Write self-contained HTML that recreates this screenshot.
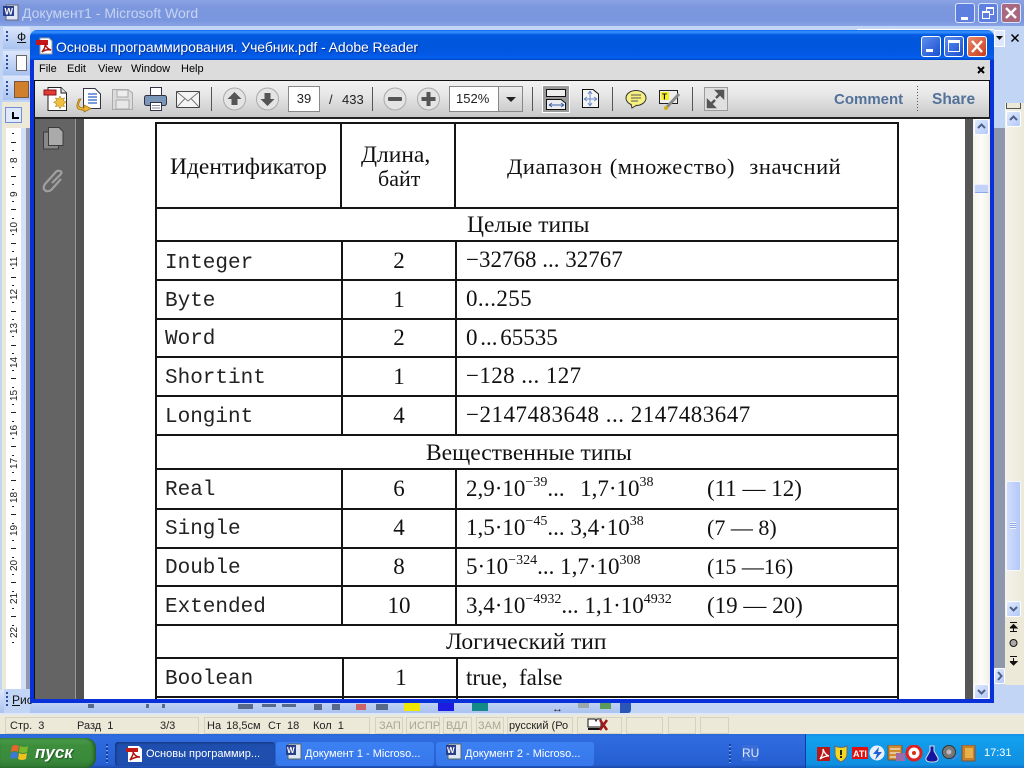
<!DOCTYPE html>
<html><head><meta charset="utf-8"><style>
html,body{margin:0;padding:0;background:#c3d5f5}
body{width:1024px;height:768px;overflow:hidden;position:relative;font-family:"Liberation Sans",sans-serif}
.a{position:absolute;white-space:nowrap}
.s{position:absolute;white-space:nowrap;font-family:"Liberation Serif",serif;font-size:23px;line-height:24px;color:#111;filter:blur(.25px)}
.m{position:absolute;white-space:nowrap;font-family:"Liberation Mono",monospace;font-size:21px;line-height:24px;color:#222;left:165px;filter:blur(.25px)}
.c{position:absolute;white-space:nowrap;font-family:"Liberation Serif",serif;font-size:23px;line-height:24px;color:#111;width:116px;left:341px;text-align:center;filter:blur(.25px)}
.h{position:absolute;background:#151515;left:155px;width:744px;height:2px}
.v{position:absolute;background:#151515;width:2px}
sup{font-size:14px;line-height:0;position:relative;top:-1px;vertical-align:super}
.t{position:absolute;font-size:11px;color:#000;white-space:nowrap;line-height:14px;top:62px}
.st{position:absolute;font-size:12px;color:#222;white-space:nowrap;line-height:14px;top:719px}
.b{position:absolute;top:717px;height:15px;border:1px solid #d6d2c0;box-sizing:content-box}
.task{position:absolute;top:742px;height:24px;border-radius:3px;background:linear-gradient(#3c81f3,#3677ea);color:#fff;font-size:11px;line-height:24px;white-space:nowrap}
.btn{position:absolute;width:20px;height:21px;border:1px solid #fff;border-radius:3px;box-sizing:border-box}
.sb{position:absolute;width:15px;height:15px;background:linear-gradient(135deg,#e0eafd,#b4c9f8);border:1px solid #fff;border-radius:2px;box-sizing:border-box}
</style></head><body>

<!-- Word title bar -->
<div class="a" style="left:0;top:0;width:1024px;height:26px;background:linear-gradient(#8aa3e4,#7b97dd 30%,#7a96de 80%,#89a4e6)"></div>
<svg class="a" style="left:2px;top:4px" width="18" height="18"><rect x="4" y="1" width="12" height="15" fill="#dfe6f5" stroke="#667"/><rect x="1" y="2" width="11" height="10" fill="#2a3f8a"/><text x="2.5" y="10.5" font-family="Liberation Sans" font-size="9" font-weight="bold" fill="#fff">W</text></svg>
<div class="a" style="left:22px;top:4px;font-size:14px;line-height:18px;color:#c6d3f2;letter-spacing:0">Документ1 - Microsoft Word</div>
<div class="a" style="left:955px;top:3px;width:20px;height:20px;border:1px solid #dbe4f8;border-radius:3px;box-sizing:border-box;background:#5d80e0"><div class="a" style="left:5px;top:13px;width:7px;height:3px;background:#fff"></div></div>
<div class="a" style="left:978px;top:3px;width:20px;height:20px;border:1px solid #dbe4f8;border-radius:3px;box-sizing:border-box;background:#5d80e0"><div class="a" style="left:7px;top:3px;width:6px;height:5px;border:1px solid #fff;border-top-width:2px"></div><div class="a" style="left:3px;top:7px;width:6px;height:5px;border:1px solid #fff;border-top-width:2px;background:#5d80e0"></div></div>
<div class="a" style="left:1001px;top:3px;width:20px;height:20px;border:1px solid #dbe4f8;border-radius:3px;box-sizing:border-box;background:#a8687f"></div>
<svg class="a" style="left:1001px;top:3px" width="20" height="20"><path d="M5 5L15 15M15 5L5 15" stroke="#fff" stroke-width="2.4"/></svg>

<!-- Word body left/top -->
<div class="a" style="left:0;top:26px;width:1024px;height:77px;background:#c3d5f5"></div>
<div class="a" style="left:857px;top:29px;width:137px;height:1px;background:#fff"></div>
<div class="a" style="left:994px;top:30px;width:11px;height:17px;background:#dfe8fb;border:1px solid #fff;box-sizing:border-box"></div>
<svg class="a" style="left:995px;top:35px" width="9" height="6"><path d="M1 1H8L4.500 5Z" fill="#111"/></svg>
<svg class="a" style="left:1010px;top:33px" width="10" height="10"><path d="M1.500 1.500L8.500 8.500M8.500 1.500L1.500 8.500" stroke="#000" stroke-width="1.500"/></svg>
<div class="a" style="left:3px;top:27px;width:27px;height:22px;background:linear-gradient(#dce7fb,#a9c2ef)"></div>
<div class="a" style="left:3px;top:51px;width:27px;height:24px;background:linear-gradient(#dce7fb,#a9c2ef)"></div>
<div class="a" style="left:3px;top:76px;width:27px;height:24px;background:linear-gradient(#dce7fb,#a9c2ef)"></div>
<div class="a" style="left:6px;top:31px;width:2px;height:12px;background:repeating-linear-gradient(#2b4f9e 0 2px,transparent 2px 4px)"></div>
<div class="a" style="left:6px;top:55px;width:2px;height:14px;background:repeating-linear-gradient(#2b4f9e 0 2px,transparent 2px 4px)"></div>
<div class="a" style="left:6px;top:81px;width:2px;height:14px;background:repeating-linear-gradient(#2b4f9e 0 2px,transparent 2px 4px)"></div>
<div class="a" style="left:17px;top:30px;font-size:12px;text-decoration:underline;color:#111">Ф</div>
<div class="a" style="left:16px;top:55px;width:9px;height:14px;background:#fff;border:1px solid #666"></div>
<div class="a" style="left:14px;top:81px;width:13px;height:15px;background:#d07f2d;border:1px solid #754"></div>
<!-- ruler column -->
<div class="a" style="left:2px;top:102px;width:28px;height:601px;background:#ece9d8"></div>
<div class="a" style="left:0;top:102px;width:2px;height:601px;background:#c3d5f5"></div>
<div class="a" style="left:5px;top:107px;width:17px;height:16px;background:#dfe8fc;border:1px solid #6f8fd8;box-sizing:border-box"><div class="a" style="left:6px;top:4px;width:2px;height:7px;background:#000"></div><div class="a" style="left:6px;top:9px;width:7px;height:2px;background:#000"></div></div>
<div class="a" style="left:6px;top:128px;width:15px;height:575px;background:#fff"></div>
<div class="a" style="left:21px;top:128px;width:5px;height:575px;background:#d4e0f7"></div>
<div class="a" style="left:26px;top:128px;width:4px;height:575px;background:#8f97ad"></div>
<svg class="a" style="left:0;top:128px" width="22" height="575" font-family="Liberation Sans" font-size="10" fill="#222">
<g fill="#222">
<rect x="12" y="5" width="2" height="1"/><rect x="11" y="14" width="5" height="1"/><rect x="12" y="22" width="2" height="1"/><rect x="12" y="39" width="2" height="1"/><rect x="11" y="48" width="5" height="1"/><rect x="12" y="56" width="2" height="1"/><rect x="12" y="73" width="2" height="1"/><rect x="11" y="81" width="5" height="1"/><rect x="12" y="90" width="2" height="1"/><rect x="12" y="106" width="2" height="1"/><rect x="11" y="115" width="5" height="1"/><rect x="12" y="123" width="2" height="1"/><rect x="12" y="140" width="2" height="1"/><rect x="11" y="149" width="5" height="1"/><rect x="12" y="157" width="2" height="1"/><rect x="12" y="174" width="2" height="1"/><rect x="11" y="183" width="5" height="1"/><rect x="12" y="191" width="2" height="1"/><rect x="12" y="208" width="2" height="1"/><rect x="11" y="217" width="5" height="1"/><rect x="12" y="225" width="2" height="1"/><rect x="12" y="242" width="2" height="1"/><rect x="11" y="250" width="5" height="1"/><rect x="12" y="259" width="2" height="1"/><rect x="12" y="276" width="2" height="1"/><rect x="11" y="284" width="5" height="1"/><rect x="12" y="293" width="2" height="1"/><rect x="12" y="310" width="2" height="1"/><rect x="11" y="318" width="5" height="1"/><rect x="12" y="327" width="2" height="1"/><rect x="12" y="344" width="2" height="1"/><rect x="11" y="352" width="5" height="1"/><rect x="12" y="361" width="2" height="1"/><rect x="12" y="378" width="2" height="1"/><rect x="11" y="386" width="5" height="1"/><rect x="12" y="395" width="2" height="1"/><rect x="12" y="412" width="2" height="1"/><rect x="11" y="420" width="5" height="1"/><rect x="12" y="429" width="2" height="1"/><rect x="12" y="446" width="2" height="1"/><rect x="11" y="454" width="5" height="1"/><rect x="12" y="463" width="2" height="1"/><rect x="12" y="480" width="2" height="1"/><rect x="11" y="488" width="5" height="1"/><rect x="12" y="497" width="2" height="1"/><rect x="12" y="514" width="2" height="1"/>
</g>
<text transform="translate(17,35) rotate(-90)">8</text>
<text transform="translate(17,69) rotate(-90)">9</text>
<text transform="translate(17,105) rotate(-90)">10</text>
<text transform="translate(17,139) rotate(-90)">11</text>
<text transform="translate(17,172) rotate(-90)">12</text>
<text transform="translate(17,206) rotate(-90)">13</text>
<text transform="translate(17,240) rotate(-90)">14</text>
<text transform="translate(17,273) rotate(-90)">15</text>
<text transform="translate(17,308) rotate(-90)">16</text>
<text transform="translate(17,341) rotate(-90)">17</text>
<text transform="translate(17,375) rotate(-90)">18</text>
<text transform="translate(17,408) rotate(-90)">19</text>
<text transform="translate(17,443) rotate(-90)">20</text>
<text transform="translate(17,476) rotate(-90)">21</text>
<text transform="translate(17,510) rotate(-90)">22</text>
</svg>

<!-- Word right side -->
<div class="a" style="left:994px;top:103px;width:30px;height:612px;background:#c3d5f5"></div>
<div class="a" style="left:994px;top:128px;width:11px;height:540px;background:#8f97ad"></div>
<div class="a" style="left:1005px;top:103px;width:19px;height:514px;background:linear-gradient(90deg,#f4f3ec,#ece9d8)"></div>
<div class="a" style="left:1006px;top:103px;width:15px;height:6px;background:#ece9d8;border:1px solid #555;border-top:0;box-sizing:border-box"></div>
<div class="sb" style="left:1006px;top:111px;height:16px"></div>
<svg class="a" style="left:1006px;top:111px" width="15" height="16"><path d="M4 9L7.500 5.500L11 9" fill="none" stroke="#4d6185" stroke-width="2"/></svg>
<div class="a" style="left:1006px;top:481px;width:15px;height:90px;background:linear-gradient(90deg,#cfdcfb,#b4c9f8);border:1px solid #f3f6fd;border-radius:2px;box-sizing:border-box"></div>
<div class="a" style="left:1010px;top:522px;width:6px;height:7px;background:repeating-linear-gradient(#eef3fd 0 1px,#8ea8e6 1px 2px)"></div>
<div class="a" style="left:1005px;top:617px;width:19px;height:68px;background:#ece9d8"></div>
<div class="sb" style="left:1006px;top:601px;height:16px"></div>
<svg class="a" style="left:1006px;top:601px" width="15" height="16"><path d="M4 6L7.500 9.500L11 6" fill="none" stroke="#4d6185" stroke-width="2"/></svg>
<svg class="a" style="left:1006px;top:620px" width="15" height="70"><path d="M4 2.500H11M4 8L7.500 4.500L11 8H4M7.500 8V11.500M4 11.500H11" fill="#111" stroke="#111"/><circle cx="7.500" cy="23" r="3.500" fill="#aaa" stroke="#111"/><path d="M4 36.500H11M4 41.500L7.500 45L11 41.500H4M7.500 38V41" fill="#111" stroke="#111"/></svg>
<div class="sb" style="left:994px;top:668px;width:11px;height:16px"></div>
<svg class="a" style="left:994px;top:668px" width="11" height="16"><path d="M4 4L7.500 8L4 12" fill="none" stroke="#4d6185" stroke-width="2"/></svg>

<!-- Word bottom toolbar remainder -->
<div class="a" style="left:0;top:690px;width:630px;height:23px;background:linear-gradient(#dce7fb,#a9c2ef)"></div>
<div class="a" style="left:4px;top:689px;width:26px;height:24px;background:#c3d5f5"></div>
<div class="a" style="left:6px;top:692px;width:2px;height:14px;background:repeating-linear-gradient(#2b4f9e 0 2px,transparent 2px 4px)"></div>
<div class="a" style="left:12px;top:693px;font-size:12px;color:#111"><u>Р</u>ис</div>
<div class="a" style="left:404px;top:703px;width:16px;height:8px;background:#f0e800"></div>
<div class="a" style="left:438px;top:703px;width:16px;height:8px;background:#1c1ce0"></div>
<div class="a" style="left:472px;top:703px;width:16px;height:8px;background:#148a88"></div>
<div class="a" style="left:552px;top:706px;font-size:11px;line-height:7px;color:#222">↔</div>
<div class="a" style="left:578px;top:703px;width:11px;height:5px;background:#9aa"></div>
<div class="a" style="left:600px;top:703px;width:11px;height:6px;background:#5a9a5a"></div>
<div class="a" style="left:620px;top:703px;width:11px;height:10px;background:#2a56b8;border-radius:0 0 3px 0"></div>
<svg class="a" style="left:0;top:703px" width="400" height="9"><g fill="#59698a"><rect x="88" y="1" width="6" height="4"/><rect x="146" y="1" width="3" height="4"/><rect x="162" y="1" width="3" height="4"/><rect x="238" y="1" width="15" height="5"/><rect x="262" y="1" width="14" height="3"/><rect x="282" y="1" width="14" height="3"/><rect x="314" y="1" width="8" height="6"/><rect x="332" y="1" width="8" height="6"/><rect x="356" y="1" width="10" height="6" fill="#c66"/><rect x="376" y="1" width="12" height="6"/></g></svg>

<!-- Status bar -->
<div class="a" style="left:0;top:713px;width:1024px;height:2px;background:#dfe7f7"></div>
<div class="a" style="left:0;top:715px;width:1024px;height:19px;background:#ece9d8"></div>
<div class="b" style="left:5px;width:192px"></div><div class="b" style="left:204px;width:164px"></div>
<div class="b" style="left:375px;width:26px"></div><div class="b" style="left:406px;width:32px"></div><div class="b" style="left:443px;width:27px"></div><div class="b" style="left:476px;width:26px"></div><div class="b" style="left:507px;width:64px"></div><div class="b" style="left:577px;width:43px"></div><div class="b" style="left:626px;width:35px"></div><div class="b" style="left:668px;width:26px"></div><div class="b" style="left:700px;width:27px"></div>
<div class="st" style="left:10px;font-size:11px;word-spacing:3px">Стр. 3</div><div class="st" style="left:77px;font-size:11px;word-spacing:3px">Разд 1</div><div class="st" style="left:160px;font-size:11px">3/3</div>
<div class="st" style="left:207px;font-size:11px;word-spacing:2px">На 18,5см</div><div class="st" style="left:268px;font-size:11px;word-spacing:3px">Ст 18</div><div class="st" style="left:313px;font-size:11px;word-spacing:3px">Кол 1</div>
<div class="st" style="left:379px;color:#a8a696;font-size:11px">ЗАП</div><div class="st" style="left:409px;color:#a8a696;font-size:11px">ИСПР</div><div class="st" style="left:446px;color:#a8a696;font-size:11px">ВДЛ</div><div class="st" style="left:478px;color:#a8a696;font-size:11px">ЗАМ</div>
<div class="st" style="left:509px;font-size:11px">русский (Ро</div>
<svg class="a" style="left:586px;top:717px" width="24" height="16"><path d="M2 2H9L10 4L11 2H15V10H2Z" fill="#fff" stroke="#111"/><path d="M2 12H14" stroke="#111" stroke-width="2"/><path d="M14 3L21 13M21 3L14 13" stroke="#a01818" stroke-width="2.500"/></svg>

<!-- Taskbar -->
<div class="a" style="left:0;top:734px;width:1024px;height:34px;background:linear-gradient(#2a67d8,#2f6ce0 10%,#255fd2 90%,#1a47a8)"></div>
<div class="a" style="left:0;top:738px;width:96px;height:30px;background:linear-gradient(#4f9e4f,#3c8e3c 25%,#3b8a3c 70%,#2f7a33);border-radius:0 10px 10px 0;box-shadow:inset -2px 0 3px #1e5a22"></div>
<svg class="a" style="left:10px;top:743px" width="20" height="19"><path d="M2 3Q5 1 9 3L8 9Q5 7 1 9Z" fill="#e4642c"/><path d="M10 3Q14 5 18 3L17 9Q13 11 9 9Z" fill="#7cb82c"/><path d="M1 10Q4 8 8 10L7 16Q4 14 0 16Z" fill="#3b78d8"/><path d="M9 10Q13 12 17 10L16 16Q12 18 8 16Z" fill="#f0c020"/></svg>
<div class="a" style="left:35px;top:741px;font-size:17px;line-height:24px;font-weight:bold;font-style:italic;color:#fff;text-shadow:1px 1px 1px #1e5a22">пуск</div>
<div class="a" style="left:106px;top:744px;width:2px;height:20px;background:repeating-linear-gradient(#143f9c 0 2px,#7ea4ee 2px 3px,transparent 3px 4px)"></div>
<div class="task" style="left:115px;width:160px;background:#1f4fae;box-shadow:inset 1px 1px 2px #12337a;padding-left:31px;box-sizing:border-box">Основы программир...</div>
<div class="task" style="left:276px;width:158px;padding-left:29px;box-sizing:border-box">Документ 1 - Microso...</div>
<div class="task" style="left:436px;width:158px;padding-left:29px;box-sizing:border-box">Документ 2 - Microso...</div>
<svg class="a" style="left:126px;top:746px" width="16" height="16"><path d="M2 0H13L16 3V16H2Z" fill="#fff"/><rect x="0" y="2" width="12" height="4" fill="#c01818"/><path d="M4 14Q8 8 7 6Q9 11 14 11Q8 11 4 14Z" fill="none" stroke="#b01010" stroke-width="1.500"/></svg>
<svg class="a" style="left:285px;top:743px" width="17" height="17"><rect x="3" y="1" width="13" height="15" fill="#dfe6f5" stroke="#566"/><rect x="1" y="2" width="10" height="10" fill="#2a3f8a"/><text x="2" y="10" font-family="Liberation Sans" font-size="8" font-weight="bold" fill="#fff">W</text></svg>
<svg class="a" style="left:445px;top:743px" width="17" height="17"><rect x="3" y="1" width="13" height="15" fill="#dfe6f5" stroke="#566"/><rect x="1" y="2" width="10" height="10" fill="#2a3f8a"/><text x="2" y="10" font-family="Liberation Sans" font-size="8" font-weight="bold" fill="#fff">W</text></svg>
<div class="a" style="left:729px;top:744px;width:2px;height:20px;background:repeating-linear-gradient(#143f9c 0 2px,#7ea4ee 2px 3px,transparent 3px 4px)"></div>
<div class="a" style="left:742px;top:745px;width:16px;height:16px;background:#3a6dd6;color:#dfe8fb;font-size:12px;line-height:16px">RU</div>
<div class="a" style="left:805px;top:734px;width:219px;height:34px;background:linear-gradient(#1590e8,#12a0ee 10%,#0f8fe0 90%,#0e6fc8);border-left:1px solid #0a3f9c;box-sizing:border-box"></div>
<svg class="a" style="left:816px;top:745px" width="165" height="18">
<rect x="1" y="2" width="13" height="14" fill="#b81818"/><path d="M4 14Q8 8 7 4Q9 10 13 11Q8 11 4 14Z" fill="none" stroke="#fff" stroke-width="1.300"/>
<path d="M19 1Q25 4 31 1V9Q31 14 25 17Q19 14 19 9Z" fill="#f4d820" stroke="#667"/><rect x="24" y="5" width="2" height="5" fill="#222"/><rect x="24" y="11" width="2" height="2" fill="#222"/>
<rect x="36" y="2" width="16" height="12" fill="#e01010"/><text x="37" y="12" font-family="Liberation Sans" font-size="9" font-weight="bold" fill="#fff">ATI</text>
<circle cx="61" cy="8" r="7.500" fill="#e8f0fb"/><path d="M63 2L57 9H61L59 15L66 7H62Z" fill="#1f5fd0"/>
<rect x="72" y="0" width="14" height="15" fill="#d08a30" stroke="#654"/><path d="M74 4H84M74 8H84M74 12H84" stroke="#fff"/><rect x="80" y="8" width="9" height="8" fill="#a06aa8"/>
<circle cx="98" cy="8" r="8" fill="#fff"/><circle cx="98" cy="8" r="7" fill="none" stroke="#e02020" stroke-width="3"/><circle cx="98" cy="8" r="2" fill="#d83010"/>
<path d="M114 1H118V6L122 13Q123 17 116 17Q109 17 110 13L114 6Z" fill="#1414a0" stroke="#ddd"/>
<circle cx="133" cy="7" r="6.500" fill="#777" stroke="#333"/><circle cx="133" cy="7" r="2.500" fill="#bbb"/><path d="M137 15L143 9" stroke="#6a80d8"/>
<rect x="146" y="0" width="13" height="16" fill="#c8802c" stroke="#754"/><rect x="149" y="3" width="8" height="10" fill="#e8b048"/>
</svg>
<div class="a" style="left:984px;top:745px;font-size:11px;line-height:16px;color:#fff">17:31</div>

<!-- Reader window frame -->
<div class="a" style="left:30px;top:30px;width:964px;height:673px;background:#0831d9;border-radius:8px 8px 0 0"></div>
<div class="a" style="left:30px;top:30px;width:964px;height:30px;border-radius:7px 7px 0 0;background:linear-gradient(#0a6af0 0,#3a93ff 2px,#0058e0 5px,#0056dc 55%,#0358e4 80%,#0460ee 92%,#0048c8)"></div>
<div class="a" style="left:34px;top:60px;width:956px;height:639px;background:#111"></div>
<svg class="a" style="left:36px;top:37px" width="18" height="18"><path d="M4 1H13L16 4V17H4Z" fill="#fff" stroke="#999"/><rect x="0" y="3" width="12" height="5" fill="#c41818"/><path d="M6 15Q10 10 9 7Q11 12 15 13Q10 12 6 15Z" fill="none" stroke="#b01010" stroke-width="1.500"/></svg>
<div class="a" style="left:56px;top:38px;font-size:14px;line-height:18px;color:#fff;text-shadow:1px 1px 1px #0a2f90;letter-spacing:-.08px">Основы программирования. Учебник.pdf - Adobe Reader</div>
<div class="btn" style="left:921px;top:36px;background:linear-gradient(135deg,#5d8eee,#1a4fd0)"><div class="a" style="left:4px;top:12px;width:7px;height:3px;background:#fff"></div></div>
<div class="btn" style="left:944px;top:36px;background:linear-gradient(135deg,#5d8eee,#1a4fd0)"><div class="a" style="left:3px;top:3px;width:12px;height:12px;border:1px solid #fff;border-top-width:3px;box-sizing:border-box"></div></div>
<div class="btn" style="left:967px;top:36px;background:linear-gradient(135deg,#e88a6a,#c83c1c)"></div>
<svg class="a" style="left:967px;top:36px" width="20" height="21"><path d="M5 5L15 16M15 5L5 16" stroke="#fff" stroke-width="2.400"/></svg>

<!-- menu bar -->
<div class="a" style="left:34px;top:60px;width:956px;height:20px;background:#dcdcdc"></div>
<div class="t" style="left:39px">File</div><div class="t" style="left:67px">Edit</div><div class="t" style="left:98px">View</div><div class="t" style="left:131px">Window</div><div class="t" style="left:181px">Help</div>
<svg class="a" style="left:976px;top:65px" width="10" height="10"><path d="M2 2L8 8M8 2L2 8" stroke="#000" stroke-width="2"/></svg>

<!-- toolbar -->
<div class="a" style="left:35px;top:81px;width:954px;height:36px;background:linear-gradient(#f2f2f2,#e6e6e6 40%,#c8c8c8)"></div>
<svg class="a" style="left:35px;top:81px" width="954" height="36" font-family="Liberation Sans">
<!-- create pdf -->
<path d="M13 6.500H26L31.500 12V29.500H13Z" fill="#fff" stroke="#222"/><path d="M26 6.500V12H31.500" fill="#ddd" stroke="#222"/><rect x="9" y="9" width="12" height="5" fill="#e03c30" stroke="#812"/><path d="M25 15l1.500 2.800 3-1-1 3 3 1.500-3 1.500 1 3-3-1-1.500 3-1.500-3-3 1 1-3-3-1.500 3-1.500-1-3 3 1z" fill="#f0c040" stroke="#a07010" stroke-width=".5"/>
<!-- export -->
<path d="M48.500 7.500H60L65.500 13V27.500H48.500Z" fill="#fff" stroke="#334"/><path d="M53 13H62M53 16H62M53 19H62M53 22H62" stroke="#2a60c8" stroke-width="1.300"/><path d="M46 18Q40 27 49 27V24L56 27.500L49 31V29Q38 30 44 18Z" fill="#f0b830" stroke="#a07010" stroke-width=".8"/>
<!-- save -->
<path d="M77.500 8.500H93L97.500 12V28.500H77.500Z" fill="#dcdcdc" stroke="#aaa"/><rect x="82" y="9" width="11" height="7" fill="#eee" stroke="#aaa"/><rect x="81" y="19" width="13" height="9" fill="#e8e8e8" stroke="#aaa"/>
<!-- print -->
<rect x="115.500" y="6.500" width="11" height="9" fill="#fff" stroke="#334"/><rect x="109.500" y="14.500" width="22" height="10" rx="2" fill="#7a96b8" stroke="#334"/><rect x="115.500" y="21.500" width="11" height="8" fill="#fff" stroke="#334"/><path d="M117 24.500H125M117 27H125" stroke="#889"/>
<!-- mail -->
<rect x="141.500" y="10.500" width="23" height="16" fill="#f4f4f4" stroke="#444"/><path d="M141.500 10.500L153 20L164.500 10.500M141.500 26.500L150 17.500M164.500 26.500L156 17.500" fill="none" stroke="#777"/>
<path d="M176.500 6V30M337.500 6V30M497.500 6V30M577.500 6V30M657.500 6V30" stroke="#555"/>
<!-- up/down -->
<circle cx="199.500" cy="18" r="11" fill="#e4e4e4" stroke="#aaa"/><path d="M199.500 11L206.500 18H202.500V24H196.500V18H192.500Z" fill="#555"/>
<circle cx="232.500" cy="18" r="11" fill="#e4e4e4" stroke="#aaa"/><path d="M232.500 25L239.500 18H235.500V12H229.500V18H225.500Z" fill="#555"/>
<!-- minus plus -->
<circle cx="360" cy="18" r="11" fill="#e4e4e4" stroke="#aaa"/><rect x="353" y="16" width="14" height="4" rx="1" fill="#555"/>
<circle cx="393.500" cy="18" r="11" fill="#e4e4e4" stroke="#aaa"/><path d="M391.500 11H395.500V16H400.500V20H395.500V25H391.500V20H386.500V16H391.500Z" fill="#555"/>
<!-- page fit -->
<rect x="507.500" y="4.500" width="27" height="27" fill="#9a9a9a" stroke="#fff"/><rect x="511.500" y="8.500" width="19" height="7" fill="#eee" stroke="#111"/><path d="M511.500 18.500H526L530.500 22V28.500H511.500Z" fill="#eee" stroke="#111"/><path d="M514 24H529M514 24L517 22M514 24L517 26M529 24L526 22M529 24L526 26" stroke="#3a60a8" fill="none"/>
<path d="M547.500 8.500H558L563.500 13V26.500H547.500Z" fill="#f4f4f4" stroke="#111"/><path d="M555 10V25M549 18H562M555 10L553 13M555 10L557 13M555 25L553 22M555 25L557 22M549 18L552 16M549 18L552 20M562 18L559 16M562 18L559 20" stroke="#6a8ac8" fill="none"/>
<!-- comment -->
<ellipse cx="601" cy="17" rx="10" ry="7.500" fill="#f6f080" stroke="#333"/><path d="M596 23L597 27L602 24" fill="#f6f080" stroke="#333"/><path d="M596 14H606M596 17H606M596 20H603" stroke="#555"/>
<!-- highlight -->
<rect x="624.500" y="9.500" width="18" height="13" fill="#eee" stroke="#222"/><rect x="626" y="11" width="8" height="8" fill="#f8f020"/><text x="627" y="18.500" font-size="8" font-weight="bold" fill="#111">T</text><path d="M632 26L644 13" stroke="#8a8a8a" stroke-width="3"/><circle cx="631" cy="27" r="2" fill="#d0b020"/>
<!-- fullscreen -->
<rect x="669.500" y="6.500" width="23" height="23" fill="#e0e0e0" stroke="#9a9a9a"/><path d="M681 17L688 10M688 10H682L688 16ZM680 19L673 26M673 26V20L679 26Z" fill="#555" stroke="#555" stroke-width="2.500"/>
<path d="M882.500 5V32" stroke="#555" stroke-dasharray="1 2"/>
</svg>
<div class="a" style="left:834px;top:91px;font-size:15px;line-height:18px;font-weight:bold;color:#527299">Comment</div>
<div class="a" style="left:932px;top:91px;font-size:15.500px;line-height:18px;font-weight:bold;color:#527299">Share</div>
<div class="a" style="left:288px;top:86px;width:32px;height:26px;background:#fff;border:1px solid #888;box-sizing:border-box;font-size:13px;line-height:24px;text-align:center;color:#222">39</div>
<div class="a" style="left:329px;top:92px;font-size:13px;line-height:15px;color:#222">/</div>
<div class="a" style="left:342px;top:92px;font-size:13px;line-height:15px;color:#222">433</div>
<div class="a" style="left:449px;top:86px;width:50px;height:26px;background:#fff;border:1px solid #888;box-sizing:border-box;font-size:13px;line-height:24px;padding-left:6px;color:#222">152%</div>
<div class="a" style="left:499px;top:86px;width:24px;height:26px;background:linear-gradient(#eee,#ccc);border:1px solid #888;border-left:0;box-sizing:border-box"></div>
<svg class="a" style="left:505px;top:96px" width="12" height="8"><path d="M1 1H11L6 6Z" fill="#222"/></svg>
<div class="a" style="left:34px;top:117px;width:956px;height:2px;background:#222"></div>

<!-- nav panel -->
<div class="a" style="left:35px;top:119px;width:40px;height:580px;background:#646464"></div>
<div class="a" style="left:75px;top:119px;width:1px;height:580px;background:#999"></div>
<div class="a" style="left:76px;top:119px;width:8px;height:580px;background:#525252"></div>
<svg class="a" style="left:0;top:0" width="84" height="200"><rect x="43.500" y="132" width="15" height="17" fill="#888" stroke="#3c3c3c"/><path d="M48.500 127.500H59L63 131.500V145.500H48.500Z" fill="#aaa" stroke="#3c3c3c"/><path d="M52 183L60 175Q63 172 60 171Q57 170 55 173L45 184Q42 189 46 191Q50 192 53 188L61 179" fill="none" stroke="#a0a0a0" stroke-width="2.200"/></svg>

<!-- page -->
<div class="a" style="left:84px;top:119px;width:881px;height:580px;background:#fff;overflow:hidden"></div>
<div class="a" style="left:965px;top:119px;width:8px;height:580px;background:#565656"></div>
<div class="a" style="left:973px;top:119px;width:17px;height:580px;background:linear-gradient(90deg,#f4f3ec,#fdfdfa 50%,#f0eee4)"></div>
<div class="sb" style="left:974px;top:119px;height:16px"></div>
<svg class="a" style="left:974px;top:119px" width="15" height="16"><path d="M4 9L7.500 5.500L11 9" fill="none" stroke="#4d6185" stroke-width="2"/></svg>
<div class="a" style="left:974px;top:184px;width:15px;height:9px;background:#c3d2f8;border:1px solid #eef;border-bottom-color:#8ea8e6;border-radius:2px;box-sizing:border-box"></div>
<div class="sb" style="left:974px;top:684px"></div>
<svg class="a" style="left:974px;top:684px" width="15" height="15"><path d="M4 6L7.500 9.500L11 6" fill="none" stroke="#4d6185" stroke-width="2"/></svg>

<!-- Table -->
<div class="h" style="top:122px"></div><div class="h" style="top:207px"></div><div class="h" style="top:240px"></div><div class="h" style="top:279px"></div><div class="h" style="top:318px"></div><div class="h" style="top:356px"></div><div class="h" style="top:395px"></div><div class="h" style="top:434px"></div><div class="h" style="top:468px"></div><div class="h" style="top:508px"></div><div class="h" style="top:547px"></div><div class="h" style="top:585px"></div><div class="h" style="top:624px"></div><div class="h" style="top:657px"></div><div class="h" style="top:696px"></div>
<div class="v" style="left:155px;top:122px;height:577px"></div><div class="v" style="left:897px;top:122px;height:577px"></div>
<div class="v" style="left:340px;top:122px;height:86px"></div><div class="v" style="left:454px;top:122px;height:86px"></div>
<div class="v" style="left:341px;top:240px;height:196px"></div><div class="v" style="left:455px;top:240px;height:196px"></div>
<div class="v" style="left:341px;top:468px;height:158px"></div><div class="v" style="left:455px;top:468px;height:158px"></div>
<div class="v" style="left:342px;top:657px;height:42px"></div><div class="v" style="left:456px;top:657px;height:42px"></div>

<div class="s" style="left:170px;top:155px;font-size:23.500px">Идентификатор</div>
<div class="s" style="left:361px;top:143px;font-size:23.500px">Длина,</div>
<div class="s" style="left:378px;top:167px;font-size:22px">байт</div>
<div class="s" style="left:507px;top:155px;font-size:22.500px;letter-spacing:.55px;word-spacing:1px">Диапазон (множество)&nbsp; значсний</div>
<div class="s" style="left:467px;top:213px;font-size:23.500px">Целые типы</div>
<div class="s" style="left:426px;top:441px;font-size:23.500px">Вещественные типы</div>
<div class="s" style="left:446px;top:630px;font-size:23.500px">Логический тип</div>

<div class="m" style="top:252px">Integer</div>
<div class="m" style="top:290px">Byte</div>
<div class="m" style="top:328px">Word</div>
<div class="m" style="top:367px">Shortint</div>
<div class="m" style="top:406px">Longint</div>
<div class="m" style="top:479px">Real</div>
<div class="m" style="top:518px">Single</div>
<div class="m" style="top:557px">Double</div>
<div class="m" style="top:596px">Extended</div>
<div class="m" style="top:668px">Boolean</div>

<div class="c" style="top:249px">2</div><div class="c" style="top:288px">1</div><div class="c" style="top:326px">2</div><div class="c" style="top:365px">1</div><div class="c" style="top:404px">4</div>
<div class="c" style="top:477px">6</div><div class="c" style="top:516px">4</div><div class="c" style="top:555px">8</div><div class="c" style="top:594px">10</div><div class="c" style="top:666px;left:343px">1</div>

<div class="s" style="left:466px;top:248px">−32768 ... 32767</div>
<div class="s" style="left:466px;top:287px;letter-spacing:.4px">0...255</div>
<div class="s" style="left:466px;top:326px;word-spacing:-3px">0 ... 65535</div>
<div class="s" style="left:466px;top:364px;letter-spacing:.4px">−128 ... 127</div>
<div class="s" style="left:466px;top:403px;letter-spacing:.5px">−2147483648 ... 2147483647</div>
<div class="s" style="left:466px;top:477px;word-spacing:2px">2,9·10<sup>−39</sup>...&nbsp; 1,7·10<sup>38</sup></div>
<div class="s" style="left:466px;top:516px">1,5·10<sup>−45</sup>... 3,4·10<sup>38</sup></div>
<div class="s" style="left:466px;top:555px">5·10<sup>−324</sup>... 1,7·10<sup>308</sup></div>
<div class="s" style="left:466px;top:594px">3,4·10<sup>−4932</sup>... 1,1·10<sup>4932</sup></div>
<div class="s" style="left:707px;top:477px">(11 — 12)</div>
<div class="s" style="left:707px;top:516px;font-size:22px">(7 — 8)</div>
<div class="s" style="left:707px;top:555px;font-size:22px">(15 —16)</div>
<div class="s" style="left:707px;top:594px">(19 — 20)</div>
<div class="s" style="left:466px;top:666px">true,&nbsp; false</div>

<!-- blue border restored -->
<div class="a" style="left:990px;top:60px;width:4px;height:643px;background:#0831d9"></div>
<div class="a" style="left:30px;top:699px;width:964px;height:4px;background:#0831d9"></div>
<div class="a" style="left:30px;top:60px;width:4px;height:643px;background:#0831d9"></div>
</body></html>
